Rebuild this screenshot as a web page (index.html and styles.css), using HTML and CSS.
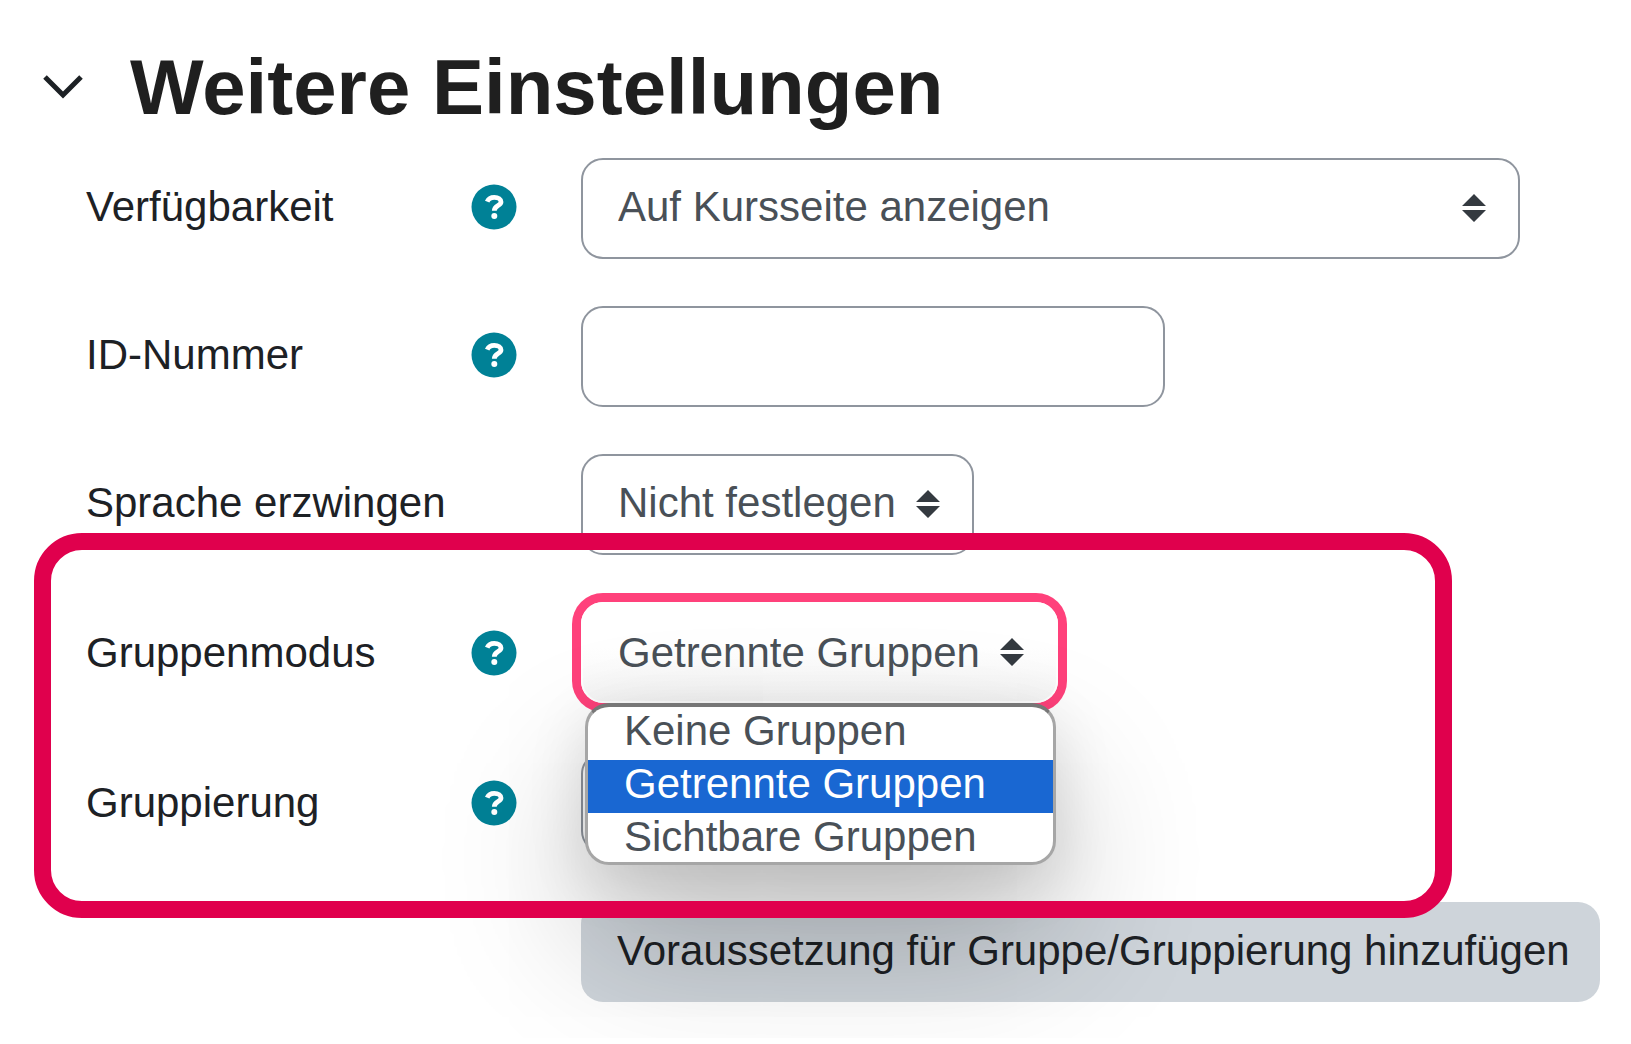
FILE: index.html
```
<!DOCTYPE html>
<html lang="de">
<head>
    <meta charset="UTF-8">
    <meta name="viewport" content="width=device-width, initial-scale=1.0">
    <title>Weitere Einstellungen</title>
    <link rel="stylesheet" href="styles.css">
</head>
<body>

    <svg class="sprite" aria-hidden="true">
        <symbol id="sort" viewBox="0 0 24 28">
            <path d="M12 0L24 12H0zM12 28L0 16h24z" fill="#343a40"/>
        </symbol>
        <symbol id="help" viewBox="0 0 46 46">
            <circle cx="23" cy="23" r="22.500" fill="#008196"/>
            <path d="M16.200 17.600C17.600 14.300 20.200 13.400 23.300 13.400C27.400 13.400 30 15.200 30 17.900C30 21.800 23.300 21.300 23.300 26.800" fill="none" stroke="#fff" stroke-width="4.800"/>
            <circle cx="23.300" cy="32" r="3" fill="#fff"/>
        </symbol>
    </svg>

    <form class="settings">
        <header class="section-header">
            <button type="button" class="toggle" aria-label="Einklappen" aria-expanded="true">
                <svg width="40" height="24" viewBox="0 0 40 24"><path d="M2 2L20 20L38 2" fill="none" stroke="#1d2125" stroke-width="5"/></svg>
            </button>
            <h1>Weitere Einstellungen</h1>
        </header>

        <div class="group">
            <div class="row">
                <label for="visible">Verfügbarkeit</label>
                <button type="button" class="help" aria-label="Hilfe zu Verfügbarkeit"><svg><use href="#help"/></svg></button>
                <div class="select wide">
                    <select id="visible">
                        <option>Auf Kursseite anzeigen</option>
                    </select>
                    <svg class="arrows"><use href="#sort"/></svg>
                </div>
            </div>
            <div class="row">
                <label for="idnumber">ID-Nummer</label>
                <button type="button" class="help" aria-label="Hilfe zu ID-Nummer"><svg><use href="#help"/></svg></button>
                <input type="text" id="idnumber">
            </div>
            <div class="row">
                <label for="lang">Sprache erzwingen</label>
                <div class="select">
                    <select id="lang">
                        <option>Nicht festlegen</option>
                    </select>
                    <svg class="arrows"><use href="#sort"/></svg>
                </div>
            </div>
        </div>

        <div class="group group-modes">
            <div class="row">
                <label for="groupmode">Gruppenmodus</label>
                <button type="button" class="help" aria-label="Hilfe zu Gruppenmodus"><svg><use href="#help"/></svg></button>
                <div class="select open">
                    <select id="groupmode">
                        <option selected>Getrennte Gruppen</option>
                    </select>
                    <svg class="arrows"><use href="#sort"/></svg>
                    <ul class="menu" role="listbox">
                        <li role="option">Keine Gruppen</li>
                        <li role="option" class="selected" aria-selected="true">Getrennte Gruppen</li>
                        <li role="option">Sichtbare Gruppen</li>
                    </ul>
                </div>
            </div>
            <div class="row">
                <label for="grouping">Gruppierung</label>
                <button type="button" class="help" aria-label="Hilfe zu Gruppierung"><svg><use href="#help"/></svg></button>
                <div class="select">
                    <select id="grouping">
                        <option></option>
                    </select>
                </div>
            </div>
            <div class="row">
                <button type="button" class="restriction">Voraussetzung für Gruppe/Gruppierung hinzufügen</button>
            </div>
            <div class="marker"></div>
        </div>
    </form>

</body>
</html>
```
FILE: styles.css
```
* {
    box-sizing: border-box;
}
body {
    margin: 0;
    background-color: #fff;
    color: #1d2125;
    font-family: Arial, "Liberation Sans", sans-serif;
    font-size: 42px;
    line-height: 53px;
}
button, input, select {
    font: inherit;
    color: inherit;
}
.sprite {
    display: none;
}
.settings {
    padding: 40px 32px 36px 86px;
    overflow: hidden;
}
.section-header {
    display: flex;
    align-items: center;
    margin: 0 0 24px -43px;
}
h1 {
    margin: 0;
    color: #1f1f1f;
    font-size: 78px;
    line-height: 94px;
}
.toggle {
    width: 87px;
    padding: 0;
    border: none;
    background: none;
    text-align: left;
}
.toggle svg {
    display: block;
}
.group {
    display: grid;
    gap: 47px;
}
.group-modes {
    position: relative;
    gap: 49px;
    margin-top: 47px;
}
.row {
    display: grid;
    grid-template-columns: 385px 110px 1fr;
    align-items: center;
}
.row label {
    padding-bottom: 4px;
    white-space: nowrap;
}
.help {
    width: 46px;
    height: 46px;
    margin-bottom: 4px;
    padding: 0;
    border: none;
    background: none;
    cursor: pointer;
}
.help svg {
    display: block;
    width: 46px;
    height: 46px;
}
.select, .row input, .restriction {
    grid-column: 3;
    justify-self: start;
}
.select {
    position: relative;
}
.select select, .row input {
    display: block;
    height: 101px;
    padding: 0 76px 4px 35px;
    border: 2px solid #8f959e;
    border-radius: 22px;
    background-color: #fff;
    color: #495057;
    appearance: none;
}
.row input {
    width: 584px;
    max-width: 100%;
}
.select.wide {
    justify-self: stretch;
    margin-right: 79px;
}
.wide select {
    width: 100%;
}
.arrows {
    position: absolute;
    top: 36px;
    right: 34px;
    width: 24px;
    height: 28px;
    pointer-events: none;
}
/* taller rows, content sits in the true centre */
.group-modes label, .group-modes select {
    padding-bottom: 0;
}
.group-modes .help {
    margin-bottom: 0;
}
.open {
    z-index: 1;
}
.open select {
    border-color: #fff;
    background: linear-gradient(#fff 45%, #f6f6f6);
    box-shadow: 0 0 0 9px #ff417b;
}
.menu {
    position: absolute;
    top: 100%;
    left: 4px;
    right: 2px;
    margin: 0;
    padding: 0;
    list-style: none;
    background-color: #fff;
    border: 3px solid #a6a6a6;
    border-top: 4px solid #777;
    border-radius: 24px;
    overflow: hidden;
    box-shadow: 0 75px 150px rgba(0, 0, 0, 0.24), 0 16px 60px rgba(0, 0, 0, 0.12);
    color: #495057;
}
.menu li {
    height: 53px;
    padding-left: 36px;
    line-height: 48px;
    white-space: nowrap;
}
.menu li:last-child {
    height: 49px;
}
.menu .selected {
    background-color: #1967d2;
    color: #fff;
}
.restriction {
    height: 100px;
    padding: 0 30px 4px 36px;
    border: none;
    border-radius: 22px;
    background-color: #ced4da;
    white-space: nowrap;
}
.marker {
    position: absolute;
    z-index: 2;
    top: -69px;
    right: 147px;
    bottom: 84px;
    left: -52px;
    border: 17px solid #e0004d;
    border-radius: 48px;
    pointer-events: none;
}
```
